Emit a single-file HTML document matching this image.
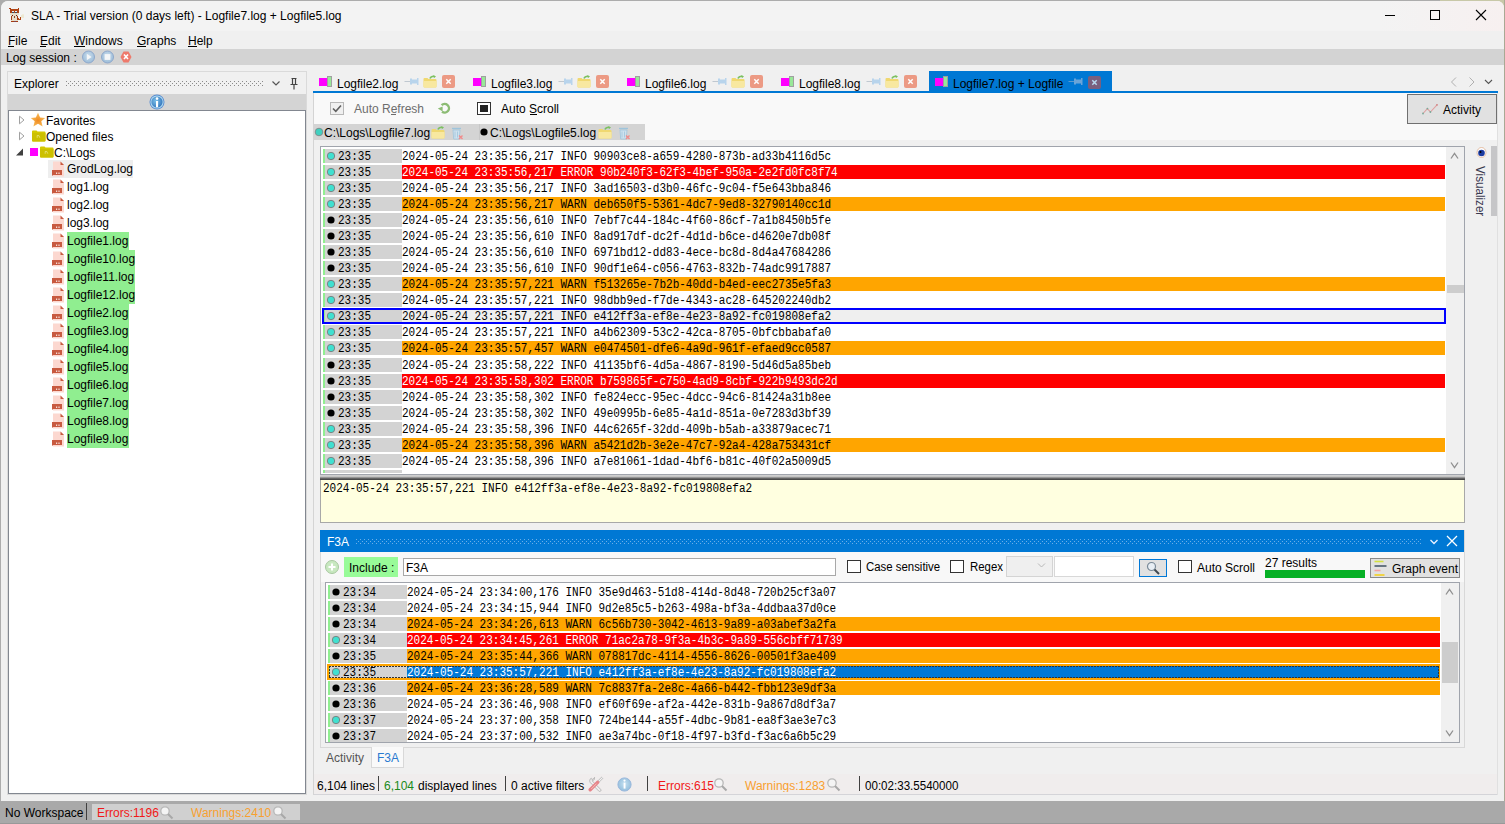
<!DOCTYPE html><html><head><meta charset="utf-8"><style>
html,body{margin:0;padding:0}
body{width:1505px;height:824px;overflow:hidden;position:relative;background:#f0f0f0;font-family:'Liberation Sans',sans-serif;font-size:12px}
div,svg{position:absolute;white-space:nowrap;box-sizing:border-box}
u{text-decoration:none;border-bottom:1px solid currentColor;display:inline-block;line-height:11px}
</style></head><body>
<div style="left:0px;top:0px;width:1505px;height:824px;background:#acacac;"></div>
<div style="left:1440px;top:0px;width:65px;height:30px;background:#c8c8a8;"></div>
<div style="left:1504px;top:0px;width:1px;height:824px;background:#a9a994;"></div>
<div style="left:1px;top:1px;width:1503px;height:822px;background:#f0f0f0;border-radius:7px 7px 0 0;"></div>
<div style="left:1px;top:1px;width:1503px;height:30px;background:#f3f3f3;border-radius:7px 7px 0 0;"></div>
<div style="left:1380px;top:1px;width:124px;height:30px;background:linear-gradient(90deg,#f3f3f3,#f7f0f0);border-radius:0 7px 0 0;"></div>
<div style="left:1px;top:31px;width:1503px;height:18px;background:#f0f0f0;"></div>
<div style="left:1px;top:49px;width:1503px;height:16px;background:#d3d3d3;"></div>
<div style="left:0px;top:801px;width:1505px;height:23px;background:#a9a9a9;"></div>
<div style="left:0px;top:823px;width:1505px;height:1px;background:#999999;"></div>
<svg style="left:6px;top:5px" width="24" height="20" viewBox="0 0 24 20" shape-rendering="crispEdges">
<rect x="3" y="3" width="2" height="1" fill="#a83c10"/><rect x="12" y="3" width="1" height="1" fill="#a83c10"/>
<rect x="4" y="4" width="9" height="5" fill="#b04414"/>
<rect x="4" y="8" width="9" height="2" fill="#e6dcc8"/>
<rect x="6" y="6" width="2" height="1" fill="#e8eef4"/><rect x="9" y="6" width="2" height="1" fill="#e8eef4"/>
<rect x="6" y="7" width="2" height="1" fill="#405060"/><rect x="9" y="7" width="2" height="1" fill="#405060"/>
<rect x="5" y="10" width="7" height="7" fill="#e6dcc8"/>
<rect x="5" y="11" width="1" height="4" fill="#a83c10"/><rect x="11" y="11" width="1" height="4" fill="#a83c10"/>
<rect x="6" y="10" width="1" height="1" fill="#6a1c08"/><rect x="10" y="10" width="1" height="1" fill="#6a1c08"/>
<rect x="8" y="11" width="1" height="2" fill="#8a4a30"/>
<rect x="5" y="16" width="7" height="1" fill="#a83c10"/><rect x="8" y="16" width="2" height="1" fill="#7a4050"/>
<rect x="12" y="13" width="1" height="2" fill="#b04414"/><rect x="13" y="14" width="2" height="1" fill="#b04414"/><rect x="14" y="12" width="1" height="2" fill="#b04414"/>
<rect x="15" y="10" width="3" height="3" fill="#ece8d4"/><rect x="16" y="9" width="2" height="1" fill="#f0ecdc"/>
</svg>
<div style="left:31px;top:10px;font-size:12px;line-height:12px;color:#000;font-family:'Liberation Sans',sans-serif;">SLA - Trial version (0 days left) - Logfile7.log + Logfile5.log</div>
<div style="left:1385px;top:15px;width:10px;height:1px;background:#000;"></div>
<div style="left:1430px;top:10px;width:10px;height:10px;border:1px solid #000;"></div>
<svg style="left:1475px;top:9px" width="12" height="12" viewBox="0 0 12 12"><path d="M1 1L11 11M11 1L1 11" stroke="#000" stroke-width="1.1"/></svg>
<div style="left:8px;top:35px;font-size:12px;line-height:12px;color:#000;font-family:'Liberation Sans',sans-serif;">File</div>
<div style="left:40px;top:35px;font-size:12px;line-height:12px;color:#000;font-family:'Liberation Sans',sans-serif;">Edit</div>
<div style="left:74px;top:35px;font-size:12px;line-height:12px;color:#000;font-family:'Liberation Sans',sans-serif;">Windows</div>
<div style="left:137px;top:35px;font-size:12px;line-height:12px;color:#000;font-family:'Liberation Sans',sans-serif;">Graphs</div>
<div style="left:188px;top:35px;font-size:12px;line-height:12px;color:#000;font-family:'Liberation Sans',sans-serif;">Help</div>
<div style="left:8px;top:46px;width:6px;height:1px;background:#000;"></div>
<div style="left:40px;top:46px;width:6px;height:1px;background:#000;"></div>
<div style="left:74px;top:46px;width:11px;height:1px;background:#000;"></div>
<div style="left:137px;top:46px;width:9px;height:1px;background:#000;"></div>
<div style="left:188px;top:46px;width:9px;height:1px;background:#000;"></div>
<div style="left:6px;top:52px;font-size:12px;line-height:12px;color:#000;font-family:'Liberation Sans',sans-serif;">Log session :</div>
<svg style="left:82px;top:50px" width="52" height="14" viewBox="0 0 52 14">
<defs><radialGradient id="gb" cx="50%" cy="40%" r="60%"><stop offset="0" stop-color="#c8dcec"/><stop offset="1" stop-color="#9cbcd8"/></radialGradient></defs>
<circle cx="6.5" cy="7" r="6" fill="url(#gb)" stroke="#8ea8cc" stroke-width="1"/><path d="M4.8 3.8L9.6 7L4.8 10.2z" fill="#f4f6f8"/>
<circle cx="25.5" cy="7" r="6" fill="url(#gb)" stroke="#8ea8cc" stroke-width="1"/><rect x="22.6" y="4.1" width="5.8" height="5.8" fill="#f4f6f8"/>
<path d="M41.5 1.5h5l3 5.5l-3 5.5h-5l-3-5.5z" fill="#ee7a6c"/><path d="M42 4.5l4 4.5M46 4.5l-4 4.5" stroke="#fff" stroke-width="1.6"/>
</svg>
<div style="left:7px;top:71px;width:300px;height:724px;background:#f0f0f0;border:1px solid #dadada;"></div>
<div style="left:14px;top:78px;font-size:12px;line-height:12px;color:#000;font-family:'Liberation Sans',sans-serif;">Explorer</div>
<div style="left:66px;top:81px;width:198px;height:5px;background:repeating-linear-gradient(90deg,transparent 0 0px,#8a8a8a 0px 1px,transparent 1px 4px) 0 0/100% 1px no-repeat,repeating-linear-gradient(90deg,transparent 0 2px,#8a8a8a 2px 3px,transparent 3px 4px) 0 2px/100% 1px no-repeat,repeating-linear-gradient(90deg,transparent 0 0px,#8a8a8a 0px 1px,transparent 1px 4px) 0 4px/100% 1px no-repeat"></div>
<svg style="left:271px;top:79px" width="10" height="8" viewBox="0 0 10 8"><path d="M1.5 2.5L5 6L8.5 2.5" stroke="#555" stroke-width="1.2" fill="none"/></svg>
<svg style="left:289px;top:77px" width="10" height="13" viewBox="0 0 10 13"><path d="M2.5 1.5h5M3.5 1.5v6M6.5 1.5v6M1.5 7.5h7M5 7.5v5" stroke="#444" stroke-width="1.2" fill="none"/></svg>
<div style="left:8px;top:94px;width:298px;height:16px;background:#d4d4d4;"></div>
<svg style="left:149px;top:94px" width="16" height="16" viewBox="0 0 16 16"><defs><radialGradient id="gi" cx="40%" cy="40%" r="60%"><stop offset="0" stop-color="#7cc0e8"/><stop offset="1" stop-color="#3a7cc0"/></radialGradient></defs>
<circle cx="8" cy="8" r="7.5" fill="#5a8cd0"/><circle cx="8" cy="8" r="6.6" fill="#b0daf0"/><circle cx="8" cy="8" r="5.6" fill="url(#gi)"/><rect x="7" y="7" width="2.1" height="6.2" fill="#fff"/><circle cx="8.05" cy="4.6" r="1.3" fill="#fff"/></svg>
<div style="left:8px;top:110px;width:298px;height:684px;background:#fff;border:1px solid #828790;"></div>
<svg style="left:18px;top:115px" width="8" height="10" viewBox="0 0 8 10"><path d="M1.5 1.2L6 5L1.5 8.8z" fill="none" stroke="#a0a0a0" stroke-width="1"/></svg>
<svg style="left:30px;top:112px" width="16" height="16" viewBox="0 0 16 16"><defs><radialGradient id="gs" cx="50%" cy="55%" r="55%"><stop offset="0" stop-color="#f08a20"/><stop offset="1" stop-color="#f8c060"/></radialGradient></defs>
<path d="M8 0.8L10.1 5.6L15.2 6L11.3 9.3L12.6 14.6L8 11.8L3.4 14.6L4.7 9.3L0.8 6L5.9 5.6z" fill="url(#gs)"/></svg>
<div style="left:46px;top:115px;font-size:12px;line-height:12px;color:#000;font-family:'Liberation Sans',sans-serif;">Favorites</div>
<svg style="left:18px;top:131px" width="8" height="10" viewBox="0 0 8 10"><path d="M1.5 1.2L6 5L1.5 8.8z" fill="none" stroke="#a0a0a0" stroke-width="1"/></svg>
<svg style="left:31px;top:130px" width="15" height="12" viewBox="0 0 15 12"><path d="M1 1.5q0-1 1-1h3.5l1 1H13.5q1 0 1 1V10.5q0 1-1 1H2q-1 0-1-1z" fill="#d4c800"/><path d="M1 3h13.5v7.5q0 1-1 1H2q-1 0-1-1z" fill="#ccc000"/><path d="M6.2 5.5v2.3M6.2 5.5h1.6l1 2.2" stroke="#eee890" stroke-width="0.7" fill="none"/></svg>
<div style="left:46px;top:131px;font-size:12px;line-height:12px;color:#000;font-family:'Liberation Sans',sans-serif;">Opened files</div>
<svg style="left:15px;top:148px" width="9" height="8" viewBox="0 0 9 8"><path d="M1 7.5L8 7.5L8 0.5z" fill="#404040"/></svg>
<div style="left:30px;top:148px;width:8px;height:8px;background:#ff00ff;"></div>
<svg style="left:39px;top:146px" width="15" height="12" viewBox="0 0 15 12"><path d="M1 1.5q0-1 1-1h3.5l1 1H13.5q1 0 1 1V10.5q0 1-1 1H2q-1 0-1-1z" fill="#d4c800"/><path d="M1 3h13.5v7.5q0 1-1 1H2q-1 0-1-1z" fill="#ccc000"/><path d="M6.2 5.5v2.3M6.2 5.5h1.6l1 2.2" stroke="#eee890" stroke-width="0.7" fill="none"/></svg>
<div style="left:54px;top:147px;font-size:12px;line-height:12px;color:#000;font-family:'Liberation Sans',sans-serif;">C:\Logs</div>
<div style="left:48px;top:160px;width:85px;height:18px;background:#eeeeee;"></div>
<svg style="left:52px;top:161px" width="13" height="16" viewBox="0 0 13 16"><path d="M1 0.5H8.5L12 4V15.5H1z" fill="#fcd8d0"/><path d="M8.5 0.5L12 4H8.5z" fill="#c85a40"/><path d="M0 9h10v5H1.2L0 15z" fill="#c85a40"/><rect x="4" y="11.6" width="1.2" height="1.2" fill="#fff"/><rect x="6.4" y="11.6" width="1.2" height="1.2" fill="#fff"/></svg>
<div style="left:67px;top:163px;font-size:12px;line-height:12px;color:#000;font-family:'Liberation Sans',sans-serif;">GrodLog.log</div>
<svg style="left:52px;top:179px" width="13" height="16" viewBox="0 0 13 16"><path d="M1 0.5H8.5L12 4V15.5H1z" fill="#fcd8d0"/><path d="M8.5 0.5L12 4H8.5z" fill="#c85a40"/><path d="M0 9h10v5H1.2L0 15z" fill="#c85a40"/><rect x="4" y="11.6" width="1.2" height="1.2" fill="#fff"/><rect x="6.4" y="11.6" width="1.2" height="1.2" fill="#fff"/></svg>
<div style="left:67px;top:181px;font-size:12px;line-height:12px;color:#000;font-family:'Liberation Sans',sans-serif;">log1.log</div>
<svg style="left:52px;top:197px" width="13" height="16" viewBox="0 0 13 16"><path d="M1 0.5H8.5L12 4V15.5H1z" fill="#fcd8d0"/><path d="M8.5 0.5L12 4H8.5z" fill="#c85a40"/><path d="M0 9h10v5H1.2L0 15z" fill="#c85a40"/><rect x="4" y="11.6" width="1.2" height="1.2" fill="#fff"/><rect x="6.4" y="11.6" width="1.2" height="1.2" fill="#fff"/></svg>
<div style="left:67px;top:199px;font-size:12px;line-height:12px;color:#000;font-family:'Liberation Sans',sans-serif;">log2.log</div>
<svg style="left:52px;top:215px" width="13" height="16" viewBox="0 0 13 16"><path d="M1 0.5H8.5L12 4V15.5H1z" fill="#fcd8d0"/><path d="M8.5 0.5L12 4H8.5z" fill="#c85a40"/><path d="M0 9h10v5H1.2L0 15z" fill="#c85a40"/><rect x="4" y="11.6" width="1.2" height="1.2" fill="#fff"/><rect x="6.4" y="11.6" width="1.2" height="1.2" fill="#fff"/></svg>
<div style="left:67px;top:217px;font-size:12px;line-height:12px;color:#000;font-family:'Liberation Sans',sans-serif;">log3.log</div>
<div style="left:67px;top:232px;width:62px;height:18px;background:#90ee90;"></div>
<svg style="left:52px;top:233px" width="13" height="16" viewBox="0 0 13 16"><path d="M1 0.5H8.5L12 4V15.5H1z" fill="#fcd8d0"/><path d="M8.5 0.5L12 4H8.5z" fill="#c85a40"/><path d="M0 9h10v5H1.2L0 15z" fill="#c85a40"/><rect x="4" y="11.6" width="1.2" height="1.2" fill="#fff"/><rect x="6.4" y="11.6" width="1.2" height="1.2" fill="#fff"/></svg>
<div style="left:67px;top:235px;font-size:12px;line-height:12px;color:#000;font-family:'Liberation Sans',sans-serif;">Logfile1.log</div>
<div style="left:67px;top:250px;width:68px;height:18px;background:#90ee90;"></div>
<svg style="left:52px;top:251px" width="13" height="16" viewBox="0 0 13 16"><path d="M1 0.5H8.5L12 4V15.5H1z" fill="#fcd8d0"/><path d="M8.5 0.5L12 4H8.5z" fill="#c85a40"/><path d="M0 9h10v5H1.2L0 15z" fill="#c85a40"/><rect x="4" y="11.6" width="1.2" height="1.2" fill="#fff"/><rect x="6.4" y="11.6" width="1.2" height="1.2" fill="#fff"/></svg>
<div style="left:67px;top:253px;font-size:12px;line-height:12px;color:#000;font-family:'Liberation Sans',sans-serif;">Logfile10.log</div>
<div style="left:67px;top:268px;width:68px;height:18px;background:#90ee90;"></div>
<svg style="left:52px;top:269px" width="13" height="16" viewBox="0 0 13 16"><path d="M1 0.5H8.5L12 4V15.5H1z" fill="#fcd8d0"/><path d="M8.5 0.5L12 4H8.5z" fill="#c85a40"/><path d="M0 9h10v5H1.2L0 15z" fill="#c85a40"/><rect x="4" y="11.6" width="1.2" height="1.2" fill="#fff"/><rect x="6.4" y="11.6" width="1.2" height="1.2" fill="#fff"/></svg>
<div style="left:67px;top:271px;font-size:12px;line-height:12px;color:#000;font-family:'Liberation Sans',sans-serif;">Logfile11.log</div>
<div style="left:67px;top:286px;width:68px;height:18px;background:#90ee90;"></div>
<svg style="left:52px;top:287px" width="13" height="16" viewBox="0 0 13 16"><path d="M1 0.5H8.5L12 4V15.5H1z" fill="#fcd8d0"/><path d="M8.5 0.5L12 4H8.5z" fill="#c85a40"/><path d="M0 9h10v5H1.2L0 15z" fill="#c85a40"/><rect x="4" y="11.6" width="1.2" height="1.2" fill="#fff"/><rect x="6.4" y="11.6" width="1.2" height="1.2" fill="#fff"/></svg>
<div style="left:67px;top:289px;font-size:12px;line-height:12px;color:#000;font-family:'Liberation Sans',sans-serif;">Logfile12.log</div>
<div style="left:67px;top:304px;width:62px;height:18px;background:#90ee90;"></div>
<svg style="left:52px;top:305px" width="13" height="16" viewBox="0 0 13 16"><path d="M1 0.5H8.5L12 4V15.5H1z" fill="#fcd8d0"/><path d="M8.5 0.5L12 4H8.5z" fill="#c85a40"/><path d="M0 9h10v5H1.2L0 15z" fill="#c85a40"/><rect x="4" y="11.6" width="1.2" height="1.2" fill="#fff"/><rect x="6.4" y="11.6" width="1.2" height="1.2" fill="#fff"/></svg>
<div style="left:67px;top:307px;font-size:12px;line-height:12px;color:#000;font-family:'Liberation Sans',sans-serif;">Logfile2.log</div>
<div style="left:67px;top:322px;width:62px;height:18px;background:#90ee90;"></div>
<svg style="left:52px;top:323px" width="13" height="16" viewBox="0 0 13 16"><path d="M1 0.5H8.5L12 4V15.5H1z" fill="#fcd8d0"/><path d="M8.5 0.5L12 4H8.5z" fill="#c85a40"/><path d="M0 9h10v5H1.2L0 15z" fill="#c85a40"/><rect x="4" y="11.6" width="1.2" height="1.2" fill="#fff"/><rect x="6.4" y="11.6" width="1.2" height="1.2" fill="#fff"/></svg>
<div style="left:67px;top:325px;font-size:12px;line-height:12px;color:#000;font-family:'Liberation Sans',sans-serif;">Logfile3.log</div>
<div style="left:67px;top:340px;width:62px;height:18px;background:#90ee90;"></div>
<svg style="left:52px;top:341px" width="13" height="16" viewBox="0 0 13 16"><path d="M1 0.5H8.5L12 4V15.5H1z" fill="#fcd8d0"/><path d="M8.5 0.5L12 4H8.5z" fill="#c85a40"/><path d="M0 9h10v5H1.2L0 15z" fill="#c85a40"/><rect x="4" y="11.6" width="1.2" height="1.2" fill="#fff"/><rect x="6.4" y="11.6" width="1.2" height="1.2" fill="#fff"/></svg>
<div style="left:67px;top:343px;font-size:12px;line-height:12px;color:#000;font-family:'Liberation Sans',sans-serif;">Logfile4.log</div>
<div style="left:67px;top:358px;width:62px;height:18px;background:#90ee90;"></div>
<svg style="left:52px;top:359px" width="13" height="16" viewBox="0 0 13 16"><path d="M1 0.5H8.5L12 4V15.5H1z" fill="#fcd8d0"/><path d="M8.5 0.5L12 4H8.5z" fill="#c85a40"/><path d="M0 9h10v5H1.2L0 15z" fill="#c85a40"/><rect x="4" y="11.6" width="1.2" height="1.2" fill="#fff"/><rect x="6.4" y="11.6" width="1.2" height="1.2" fill="#fff"/></svg>
<div style="left:67px;top:361px;font-size:12px;line-height:12px;color:#000;font-family:'Liberation Sans',sans-serif;">Logfile5.log</div>
<div style="left:67px;top:376px;width:62px;height:18px;background:#90ee90;"></div>
<svg style="left:52px;top:377px" width="13" height="16" viewBox="0 0 13 16"><path d="M1 0.5H8.5L12 4V15.5H1z" fill="#fcd8d0"/><path d="M8.5 0.5L12 4H8.5z" fill="#c85a40"/><path d="M0 9h10v5H1.2L0 15z" fill="#c85a40"/><rect x="4" y="11.6" width="1.2" height="1.2" fill="#fff"/><rect x="6.4" y="11.6" width="1.2" height="1.2" fill="#fff"/></svg>
<div style="left:67px;top:379px;font-size:12px;line-height:12px;color:#000;font-family:'Liberation Sans',sans-serif;">Logfile6.log</div>
<div style="left:67px;top:394px;width:62px;height:18px;background:#90ee90;"></div>
<svg style="left:52px;top:395px" width="13" height="16" viewBox="0 0 13 16"><path d="M1 0.5H8.5L12 4V15.5H1z" fill="#fcd8d0"/><path d="M8.5 0.5L12 4H8.5z" fill="#c85a40"/><path d="M0 9h10v5H1.2L0 15z" fill="#c85a40"/><rect x="4" y="11.6" width="1.2" height="1.2" fill="#fff"/><rect x="6.4" y="11.6" width="1.2" height="1.2" fill="#fff"/></svg>
<div style="left:67px;top:397px;font-size:12px;line-height:12px;color:#000;font-family:'Liberation Sans',sans-serif;">Logfile7.log</div>
<div style="left:67px;top:412px;width:62px;height:18px;background:#90ee90;"></div>
<svg style="left:52px;top:413px" width="13" height="16" viewBox="0 0 13 16"><path d="M1 0.5H8.5L12 4V15.5H1z" fill="#fcd8d0"/><path d="M8.5 0.5L12 4H8.5z" fill="#c85a40"/><path d="M0 9h10v5H1.2L0 15z" fill="#c85a40"/><rect x="4" y="11.6" width="1.2" height="1.2" fill="#fff"/><rect x="6.4" y="11.6" width="1.2" height="1.2" fill="#fff"/></svg>
<div style="left:67px;top:415px;font-size:12px;line-height:12px;color:#000;font-family:'Liberation Sans',sans-serif;">Logfile8.log</div>
<div style="left:67px;top:430px;width:62px;height:18px;background:#90ee90;"></div>
<svg style="left:52px;top:431px" width="13" height="16" viewBox="0 0 13 16"><path d="M1 0.5H8.5L12 4V15.5H1z" fill="#fcd8d0"/><path d="M8.5 0.5L12 4H8.5z" fill="#c85a40"/><path d="M0 9h10v5H1.2L0 15z" fill="#c85a40"/><rect x="4" y="11.6" width="1.2" height="1.2" fill="#fff"/><rect x="6.4" y="11.6" width="1.2" height="1.2" fill="#fff"/></svg>
<div style="left:67px;top:433px;font-size:12px;line-height:12px;color:#000;font-family:'Liberation Sans',sans-serif;">Logfile9.log</div>
<div style="left:319px;top:78px;width:8px;height:8px;background:#ff00ff;"></div>
<div style="left:327px;top:76px;width:5px;height:11px;background:#98e898;border:1px solid #a0a0a0;"></div>
<div style="left:337px;top:78px;font-size:12px;line-height:12px;color:#000;font-family:'Liberation Sans',sans-serif;">Logfile2.log</div>
<svg style="left:404px;top:77px" width="15" height="9" viewBox="0 0 15 9"><path d="M0.5 4.5H6" stroke="#c0c8d0" stroke-width="1"/><path d="M6 1.5h2v6H6zM8 2.5h5.5v4H8z" fill="#b8d4ec"/><rect x="13" y="1" width="1.5" height="7" fill="#b8d4ec"/></svg>
<svg style="left:423px;top:75px" width="14" height="13" viewBox="0 0 14 13"><path d="M0.5 4q0-1 1-1h3l1 1h7q1 0 1 1v6.5q0 1-1 1h-11q-1 0-1-1z" fill="#f0d870"/><path d="M0.5 6h13v5.5q0 1-1 1h-11q-1 0-1-1z" fill="#f8e8a0"/><path d="M7 3.5q1-2.5 4-2.3" stroke="#7cc060" stroke-width="1.6" fill="none"/><path d="M10.5 0l2.5 1.5l-2.2 1.8z" fill="#7cc060"/></svg>
<svg style="left:442px;top:75px" width="13" height="13" viewBox="0 0 13 13"><rect x="0" y="0" width="13" height="13" rx="2" fill="#ec9a84"/><path d="M4.3 4.3l4.4 4.4M8.7 4.3l-4.4 4.4" stroke="#fff" stroke-width="1.5"/></svg>
<div style="left:473px;top:78px;width:8px;height:8px;background:#ff00ff;"></div>
<div style="left:481px;top:76px;width:5px;height:11px;background:#98e898;border:1px solid #a0a0a0;"></div>
<div style="left:491px;top:78px;font-size:12px;line-height:12px;color:#000;font-family:'Liberation Sans',sans-serif;">Logfile3.log</div>
<svg style="left:558px;top:77px" width="15" height="9" viewBox="0 0 15 9"><path d="M0.5 4.5H6" stroke="#c0c8d0" stroke-width="1"/><path d="M6 1.5h2v6H6zM8 2.5h5.5v4H8z" fill="#b8d4ec"/><rect x="13" y="1" width="1.5" height="7" fill="#b8d4ec"/></svg>
<svg style="left:577px;top:75px" width="14" height="13" viewBox="0 0 14 13"><path d="M0.5 4q0-1 1-1h3l1 1h7q1 0 1 1v6.5q0 1-1 1h-11q-1 0-1-1z" fill="#f0d870"/><path d="M0.5 6h13v5.5q0 1-1 1h-11q-1 0-1-1z" fill="#f8e8a0"/><path d="M7 3.5q1-2.5 4-2.3" stroke="#7cc060" stroke-width="1.6" fill="none"/><path d="M10.5 0l2.5 1.5l-2.2 1.8z" fill="#7cc060"/></svg>
<svg style="left:596px;top:75px" width="13" height="13" viewBox="0 0 13 13"><rect x="0" y="0" width="13" height="13" rx="2" fill="#ec9a84"/><path d="M4.3 4.3l4.4 4.4M8.7 4.3l-4.4 4.4" stroke="#fff" stroke-width="1.5"/></svg>
<div style="left:627px;top:78px;width:8px;height:8px;background:#ff00ff;"></div>
<div style="left:635px;top:76px;width:5px;height:11px;background:#98e898;border:1px solid #a0a0a0;"></div>
<div style="left:645px;top:78px;font-size:12px;line-height:12px;color:#000;font-family:'Liberation Sans',sans-serif;">Logfile6.log</div>
<svg style="left:712px;top:77px" width="15" height="9" viewBox="0 0 15 9"><path d="M0.5 4.5H6" stroke="#c0c8d0" stroke-width="1"/><path d="M6 1.5h2v6H6zM8 2.5h5.5v4H8z" fill="#b8d4ec"/><rect x="13" y="1" width="1.5" height="7" fill="#b8d4ec"/></svg>
<svg style="left:731px;top:75px" width="14" height="13" viewBox="0 0 14 13"><path d="M0.5 4q0-1 1-1h3l1 1h7q1 0 1 1v6.5q0 1-1 1h-11q-1 0-1-1z" fill="#f0d870"/><path d="M0.5 6h13v5.5q0 1-1 1h-11q-1 0-1-1z" fill="#f8e8a0"/><path d="M7 3.5q1-2.5 4-2.3" stroke="#7cc060" stroke-width="1.6" fill="none"/><path d="M10.5 0l2.5 1.5l-2.2 1.8z" fill="#7cc060"/></svg>
<svg style="left:750px;top:75px" width="13" height="13" viewBox="0 0 13 13"><rect x="0" y="0" width="13" height="13" rx="2" fill="#ec9a84"/><path d="M4.3 4.3l4.4 4.4M8.7 4.3l-4.4 4.4" stroke="#fff" stroke-width="1.5"/></svg>
<div style="left:781px;top:78px;width:8px;height:8px;background:#ff00ff;"></div>
<div style="left:789px;top:76px;width:5px;height:11px;background:#98e898;border:1px solid #a0a0a0;"></div>
<div style="left:799px;top:78px;font-size:12px;line-height:12px;color:#000;font-family:'Liberation Sans',sans-serif;">Logfile8.log</div>
<svg style="left:866px;top:77px" width="15" height="9" viewBox="0 0 15 9"><path d="M0.5 4.5H6" stroke="#c0c8d0" stroke-width="1"/><path d="M6 1.5h2v6H6zM8 2.5h5.5v4H8z" fill="#b8d4ec"/><rect x="13" y="1" width="1.5" height="7" fill="#b8d4ec"/></svg>
<svg style="left:885px;top:75px" width="14" height="13" viewBox="0 0 14 13"><path d="M0.5 4q0-1 1-1h3l1 1h7q1 0 1 1v6.5q0 1-1 1h-11q-1 0-1-1z" fill="#f0d870"/><path d="M0.5 6h13v5.5q0 1-1 1h-11q-1 0-1-1z" fill="#f8e8a0"/><path d="M7 3.5q1-2.5 4-2.3" stroke="#7cc060" stroke-width="1.6" fill="none"/><path d="M10.5 0l2.5 1.5l-2.2 1.8z" fill="#7cc060"/></svg>
<svg style="left:904px;top:75px" width="13" height="13" viewBox="0 0 13 13"><rect x="0" y="0" width="13" height="13" rx="2" fill="#ec9a84"/><path d="M4.3 4.3l4.4 4.4M8.7 4.3l-4.4 4.4" stroke="#fff" stroke-width="1.5"/></svg>
<div style="left:929px;top:71px;width:183px;height:21px;background:#0078d4;"></div>
<div style="left:935px;top:78px;width:8px;height:8px;background:#ff00ff;"></div>
<div style="left:943px;top:76px;width:5px;height:11px;background:#98e898;border:1px solid #a0a0a0;"></div>
<div style="left:953px;top:78px;width:110px;height:14px;overflow:hidden;font-size:12px;line-height:12px;color:#000">Logfile7.log + Logfile5.log</div>
<svg style="left:1068px;top:77px" width="15" height="9" viewBox="0 0 15 9"><path d="M0.5 4.5H6" stroke="#5a9ad0" stroke-width="1"/><path d="M6 1.5h2v6H6zM8 2.5h5.5v4H8z" fill="#6aa4d8"/><rect x="13" y="1" width="1.5" height="7" fill="#6aa4d8"/></svg>
<svg style="left:1088px;top:76px" width="13" height="13" viewBox="0 0 13 13"><rect x="0" y="0" width="13" height="13" rx="2" fill="#7a5f7e"/><path d="M4.3 4.3l4.4 4.4M8.7 4.3l-4.4 4.4" stroke="#b8d8f0" stroke-width="1.5"/></svg>
<div style="left:313px;top:91px;width:1185px;height:2px;background:#0078d4;"></div>
<svg style="left:1449px;top:76px" width="48" height="12" viewBox="0 0 48 12"><path d="M7 1.5L2.5 6L7 10.5M20.5 1.5L25 6L20.5 10.5" stroke="#b0b0b0" stroke-width="1" fill="none"/><path d="M36 4L39.5 7.5L43 4" stroke="#555" stroke-width="1.1" fill="none"/></svg>
<div style="left:313px;top:93px;width:1185px;height:702px;background:#f0f0f0;border-left:1px solid #d4d4d4;border-right:1px solid #e0e0e0;"></div>
<div style="left:314px;top:93px;width:1183px;height:47px;background:#f9f9f9;"></div>
<div style="left:330px;top:102px;width:14px;height:13px;background:#f0f0f0;border:1px solid #b8b8b8;"></div>
<svg style="left:330px;top:102px" width="14" height="13" viewBox="0 0 14 13"><path d="M3 6.5L5.8 9.3L11 3.5" stroke="#606060" stroke-width="1.6" fill="none"/></svg>
<div style="left:354px;top:103px;font-size:12px;line-height:12px;color:#6d6d6d;font-family:'Liberation Sans',sans-serif;">Auto Refresh</div>
<div style="left:391px;top:114px;width:5px;height:1px;background:#6d6d6d;"></div>
<svg style="left:437px;top:101px" width="15" height="14" viewBox="0 0 15 14"><path d="M4.6 4.2A4.3 4.3 0 1 1 5 10.6" stroke="#8cbc74" stroke-width="2.4" fill="none"/><path d="M0.8 7.6L5.6 5.4L5.6 10.4z" fill="#8cbc74"/></svg>
<div style="left:477px;top:102px;width:14px;height:13px;background:#fff;border:1px solid #333;"></div>
<div style="left:480px;top:105px;width:8px;height:7px;background:#222;"></div>
<div style="left:501px;top:103px;font-size:12px;line-height:12px;color:#000;font-family:'Liberation Sans',sans-serif;">Auto Scroll</div>
<div style="left:530px;top:114px;width:7px;height:1px;background:#000;"></div>
<div style="left:1407px;top:94px;width:90px;height:30px;background:#e1e1e1;border:1px solid #707070;"></div>
<svg style="left:1420px;top:101px" width="18" height="16" viewBox="0 0 18 16"><path d="M3 12.5L7.4 7.6L10.4 11L17 3.8" stroke="#e0a0a0" stroke-width="1.1" fill="none"/><circle cx="3" cy="12.5" r="0.9" fill="#7aaa9a"/><circle cx="7.4" cy="7.6" r="0.9" fill="#7aaa9a"/><circle cx="10.4" cy="11" r="0.9" fill="#7aaa9a"/><circle cx="17" cy="3.8" r="0.9" fill="#d08080"/></svg>
<div style="left:1443px;top:104px;font-size:12px;line-height:12px;color:#000;font-family:'Liberation Sans',sans-serif;">Activity</div>
<div style="left:314px;top:124px;width:331px;height:16px;background:#d4d4d4;"></div>
<div style="left:479px;top:124px;width:1px;height:16px;background:#c8c8c8;"></div>
<svg style="left:314px;top:127px" width="10" height="10"><circle cx="5" cy="5" r="3.8" fill="#40d0c0" stroke="#808080" stroke-width="0.8"/></svg>
<div style="left:324px;top:127px;font-size:12px;line-height:12px;color:#000;font-family:'Liberation Sans',sans-serif;">C:\Logs\Logfile7.log</div>
<svg style="left:479px;top:127px" width="10" height="10"><circle cx="5" cy="5" r="3.6" fill="#000"/></svg>
<div style="left:490px;top:127px;font-size:12px;line-height:12px;color:#000;font-family:'Liberation Sans',sans-serif;">C:\Logs\Logfile5.log</div>
<svg style="left:431px;top:126px" width="14" height="13" viewBox="0 0 14 13"><path d="M0.5 4q0-1 1-1h3l1 1h7q1 0 1 1v6.5q0 1-1 1h-11q-1 0-1-1z" fill="#f0d870"/><path d="M0.5 6h13v5.5q0 1-1 1h-11q-1 0-1-1z" fill="#f8e8a0"/><path d="M7 3.5q1-2.5 4-2.3" stroke="#7cc060" stroke-width="1.6" fill="none"/><path d="M10.5 0l2.5 1.5l-2.2 1.8z" fill="#7cc060"/></svg>
<svg style="left:450px;top:126px" width="14" height="14" viewBox="0 0 14 14"><path d="M2 2.5h9" stroke="#9ec4dc" stroke-width="1.4"/><path d="M3 4h7l-0.7 9H3.7z" fill="#cfe2ee" stroke="#9ec4dc" stroke-width="0.8"/><path d="M5 5.5v6M7.5 5.5v6" stroke="#9ec4dc" stroke-width="0.8"/><path d="M9 9.5l3.5 3.5M12.5 9.5L9 13" stroke="#f08c8c" stroke-width="1.4"/></svg>
<svg style="left:598px;top:126px" width="14" height="13" viewBox="0 0 14 13"><path d="M0.5 4q0-1 1-1h3l1 1h7q1 0 1 1v6.5q0 1-1 1h-11q-1 0-1-1z" fill="#f0d870"/><path d="M0.5 6h13v5.5q0 1-1 1h-11q-1 0-1-1z" fill="#f8e8a0"/><path d="M7 3.5q1-2.5 4-2.3" stroke="#7cc060" stroke-width="1.6" fill="none"/><path d="M10.5 0l2.5 1.5l-2.2 1.8z" fill="#7cc060"/></svg>
<svg style="left:617px;top:126px" width="14" height="14" viewBox="0 0 14 14"><path d="M2 2.5h9" stroke="#9ec4dc" stroke-width="1.4"/><path d="M3 4h7l-0.7 9H3.7z" fill="#cfe2ee" stroke="#9ec4dc" stroke-width="0.8"/><path d="M5 5.5v6M7.5 5.5v6" stroke="#9ec4dc" stroke-width="0.8"/><path d="M9 9.5l3.5 3.5M12.5 9.5L9 13" stroke="#f08c8c" stroke-width="1.4"/></svg>
<div style="left:320px;top:146px;width:1145px;height:329px;background:#fff;border:1px solid #a0a4ac;"></div>
<div style="left:323px;top:149px;width:2px;height:14px;background:#90ee90;"></div>
<div style="left:325px;top:149px;width:77px;height:14px;background:#d3d3d3;"></div>
<svg style="left:326px;top:151px" width="10" height="10"><circle cx="5" cy="5" r="3.7" fill="#40e0d0" stroke="#7a7a7a" stroke-width="0.9"/></svg>
<div style="left:338px;top:151px;font-size:12px;line-height:12px;color:#000;font-family:'Liberation Mono',monospace;transform:scaleX(0.9167);transform-origin:0 0;">23:35</div>
<div style="left:402px;top:151px;font-size:12px;line-height:12px;color:#000;font-family:'Liberation Mono',monospace;transform:scaleX(0.9167);transform-origin:0 0;">2024-05-24 23:35:56,217 INFO 90903ce8-a659-4280-873b-ad33b4116d5c</div>
<div style="left:323px;top:165px;width:2px;height:14px;background:#90ee90;"></div>
<div style="left:325px;top:165px;width:77px;height:14px;background:#d3d3d3;"></div>
<div style="left:402px;top:165px;width:1043px;height:14px;background:#ff0000;"></div>
<svg style="left:326px;top:167px" width="10" height="10"><circle cx="5" cy="5" r="3.7" fill="#40e0d0" stroke="#7a7a7a" stroke-width="0.9"/></svg>
<div style="left:338px;top:167px;font-size:12px;line-height:12px;color:#000;font-family:'Liberation Mono',monospace;transform:scaleX(0.9167);transform-origin:0 0;">23:35</div>
<div style="left:402px;top:167px;font-size:12px;line-height:12px;color:#fff;font-family:'Liberation Mono',monospace;transform:scaleX(0.9167);transform-origin:0 0;">2024-05-24 23:35:56,217 ERROR 90b240f3-62f3-4bef-950a-2e2fd0fc8f74</div>
<div style="left:323px;top:181px;width:2px;height:14px;background:#90ee90;"></div>
<div style="left:325px;top:181px;width:77px;height:14px;background:#d3d3d3;"></div>
<svg style="left:326px;top:183px" width="10" height="10"><circle cx="5" cy="5" r="3.7" fill="#40e0d0" stroke="#7a7a7a" stroke-width="0.9"/></svg>
<div style="left:338px;top:183px;font-size:12px;line-height:12px;color:#000;font-family:'Liberation Mono',monospace;transform:scaleX(0.9167);transform-origin:0 0;">23:35</div>
<div style="left:402px;top:183px;font-size:12px;line-height:12px;color:#000;font-family:'Liberation Mono',monospace;transform:scaleX(0.9167);transform-origin:0 0;">2024-05-24 23:35:56,217 INFO 3ad16503-d3b0-46fc-9c04-f5e643bba846</div>
<div style="left:323px;top:197px;width:2px;height:14px;background:#90ee90;"></div>
<div style="left:325px;top:197px;width:77px;height:14px;background:#d3d3d3;"></div>
<div style="left:402px;top:197px;width:1043px;height:14px;background:#ffa500;"></div>
<svg style="left:326px;top:199px" width="10" height="10"><circle cx="5" cy="5" r="3.7" fill="#40e0d0" stroke="#7a7a7a" stroke-width="0.9"/></svg>
<div style="left:338px;top:199px;font-size:12px;line-height:12px;color:#000;font-family:'Liberation Mono',monospace;transform:scaleX(0.9167);transform-origin:0 0;">23:35</div>
<div style="left:402px;top:199px;font-size:12px;line-height:12px;color:#000;font-family:'Liberation Mono',monospace;transform:scaleX(0.9167);transform-origin:0 0;">2024-05-24 23:35:56,217 WARN deb650f5-5361-4dc7-9ed8-32790140cc1d</div>
<div style="left:323px;top:213px;width:2px;height:14px;background:#90ee90;"></div>
<div style="left:325px;top:213px;width:77px;height:14px;background:#d3d3d3;"></div>
<svg style="left:326px;top:215px" width="10" height="10"><circle cx="5" cy="5" r="3.6" fill="#000"/></svg>
<div style="left:338px;top:215px;font-size:12px;line-height:12px;color:#000;font-family:'Liberation Mono',monospace;transform:scaleX(0.9167);transform-origin:0 0;">23:35</div>
<div style="left:402px;top:215px;font-size:12px;line-height:12px;color:#000;font-family:'Liberation Mono',monospace;transform:scaleX(0.9167);transform-origin:0 0;">2024-05-24 23:35:56,610 INFO 7ebf7c44-184c-4f60-86cf-7a1b8450b5fe</div>
<div style="left:323px;top:229px;width:2px;height:14px;background:#90ee90;"></div>
<div style="left:325px;top:229px;width:77px;height:14px;background:#d3d3d3;"></div>
<svg style="left:326px;top:231px" width="10" height="10"><circle cx="5" cy="5" r="3.6" fill="#000"/></svg>
<div style="left:338px;top:231px;font-size:12px;line-height:12px;color:#000;font-family:'Liberation Mono',monospace;transform:scaleX(0.9167);transform-origin:0 0;">23:35</div>
<div style="left:402px;top:231px;font-size:12px;line-height:12px;color:#000;font-family:'Liberation Mono',monospace;transform:scaleX(0.9167);transform-origin:0 0;">2024-05-24 23:35:56,610 INFO 8ad917df-dc2f-4d1d-b6ce-d4620e7db08f</div>
<div style="left:323px;top:245px;width:2px;height:14px;background:#90ee90;"></div>
<div style="left:325px;top:245px;width:77px;height:14px;background:#d3d3d3;"></div>
<svg style="left:326px;top:247px" width="10" height="10"><circle cx="5" cy="5" r="3.6" fill="#000"/></svg>
<div style="left:338px;top:247px;font-size:12px;line-height:12px;color:#000;font-family:'Liberation Mono',monospace;transform:scaleX(0.9167);transform-origin:0 0;">23:35</div>
<div style="left:402px;top:247px;font-size:12px;line-height:12px;color:#000;font-family:'Liberation Mono',monospace;transform:scaleX(0.9167);transform-origin:0 0;">2024-05-24 23:35:56,610 INFO 6971bd12-dd83-4ece-bc8d-8d4a47684286</div>
<div style="left:323px;top:261px;width:2px;height:14px;background:#90ee90;"></div>
<div style="left:325px;top:261px;width:77px;height:14px;background:#d3d3d3;"></div>
<svg style="left:326px;top:263px" width="10" height="10"><circle cx="5" cy="5" r="3.6" fill="#000"/></svg>
<div style="left:338px;top:263px;font-size:12px;line-height:12px;color:#000;font-family:'Liberation Mono',monospace;transform:scaleX(0.9167);transform-origin:0 0;">23:35</div>
<div style="left:402px;top:263px;font-size:12px;line-height:12px;color:#000;font-family:'Liberation Mono',monospace;transform:scaleX(0.9167);transform-origin:0 0;">2024-05-24 23:35:56,610 INFO 90df1e64-c056-4763-832b-74adc9917887</div>
<div style="left:323px;top:277px;width:2px;height:14px;background:#90ee90;"></div>
<div style="left:325px;top:277px;width:77px;height:14px;background:#d3d3d3;"></div>
<div style="left:402px;top:277px;width:1043px;height:14px;background:#ffa500;"></div>
<svg style="left:326px;top:279px" width="10" height="10"><circle cx="5" cy="5" r="3.7" fill="#40e0d0" stroke="#7a7a7a" stroke-width="0.9"/></svg>
<div style="left:338px;top:279px;font-size:12px;line-height:12px;color:#000;font-family:'Liberation Mono',monospace;transform:scaleX(0.9167);transform-origin:0 0;">23:35</div>
<div style="left:402px;top:279px;font-size:12px;line-height:12px;color:#000;font-family:'Liberation Mono',monospace;transform:scaleX(0.9167);transform-origin:0 0;">2024-05-24 23:35:57,221 WARN f513265e-7b2b-40dd-b4ed-eec2735e5fa3</div>
<div style="left:323px;top:293px;width:2px;height:14px;background:#90ee90;"></div>
<div style="left:325px;top:293px;width:77px;height:14px;background:#d3d3d3;"></div>
<svg style="left:326px;top:295px" width="10" height="10"><circle cx="5" cy="5" r="3.7" fill="#40e0d0" stroke="#7a7a7a" stroke-width="0.9"/></svg>
<div style="left:338px;top:295px;font-size:12px;line-height:12px;color:#000;font-family:'Liberation Mono',monospace;transform:scaleX(0.9167);transform-origin:0 0;">23:35</div>
<div style="left:402px;top:295px;font-size:12px;line-height:12px;color:#000;font-family:'Liberation Mono',monospace;transform:scaleX(0.9167);transform-origin:0 0;">2024-05-24 23:35:57,221 INFO 98dbb9ed-f7de-4343-ac28-645202240db2</div>
<div style="left:322px;top:308px;width:1124px;height:16px;border:2px solid #0000ff;"></div>
<div style="left:324px;top:310px;width:1120px;height:12px;background:#fffff2;"></div>
<div style="left:323px;top:309px;width:2px;height:14px;background:#90ee90;"></div>
<div style="left:325px;top:309px;width:77px;height:14px;background:#d3d3d3;"></div>
<div style="left:402px;top:309px;width:1042px;height:14px;background:#efefef;"></div>
<svg style="left:326px;top:311px" width="10" height="10"><circle cx="5" cy="5" r="3.7" fill="#40e0d0" stroke="#7a7a7a" stroke-width="0.9"/></svg>
<div style="left:338px;top:311px;font-size:12px;line-height:12px;color:#000;font-family:'Liberation Mono',monospace;transform:scaleX(0.9167);transform-origin:0 0;">23:35</div>
<div style="left:402px;top:311px;font-size:12px;line-height:12px;color:#000;font-family:'Liberation Mono',monospace;transform:scaleX(0.9167);transform-origin:0 0;">2024-05-24 23:35:57,221 INFO e412ff3a-ef8e-4e23-8a92-fc019808efa2</div>
<div style="left:322px;top:308px;width:1124px;height:16px;border:2px solid #0000ff;"></div>
<div style="left:323px;top:325px;width:2px;height:14px;background:#90ee90;"></div>
<div style="left:325px;top:325px;width:77px;height:14px;background:#d3d3d3;"></div>
<svg style="left:326px;top:327px" width="10" height="10"><circle cx="5" cy="5" r="3.7" fill="#40e0d0" stroke="#7a7a7a" stroke-width="0.9"/></svg>
<div style="left:338px;top:327px;font-size:12px;line-height:12px;color:#000;font-family:'Liberation Mono',monospace;transform:scaleX(0.9167);transform-origin:0 0;">23:35</div>
<div style="left:402px;top:327px;font-size:12px;line-height:12px;color:#000;font-family:'Liberation Mono',monospace;transform:scaleX(0.9167);transform-origin:0 0;">2024-05-24 23:35:57,221 INFO a4b62309-53c2-42ca-8705-0bfcbbabafa0</div>
<div style="left:323px;top:341px;width:2px;height:14px;background:#90ee90;"></div>
<div style="left:325px;top:341px;width:77px;height:14px;background:#d3d3d3;"></div>
<div style="left:402px;top:341px;width:1043px;height:14px;background:#ffa500;"></div>
<svg style="left:326px;top:343px" width="10" height="10"><circle cx="5" cy="5" r="3.7" fill="#40e0d0" stroke="#7a7a7a" stroke-width="0.9"/></svg>
<div style="left:338px;top:343px;font-size:12px;line-height:12px;color:#000;font-family:'Liberation Mono',monospace;transform:scaleX(0.9167);transform-origin:0 0;">23:35</div>
<div style="left:402px;top:343px;font-size:12px;line-height:12px;color:#000;font-family:'Liberation Mono',monospace;transform:scaleX(0.9167);transform-origin:0 0;">2024-05-24 23:35:57,457 WARN e0474501-dfe6-4a9d-961f-efaed9cc0587</div>
<div style="left:323px;top:358px;width:2px;height:14px;background:#90ee90;"></div>
<div style="left:325px;top:358px;width:77px;height:14px;background:#d3d3d3;"></div>
<svg style="left:326px;top:360px" width="10" height="10"><circle cx="5" cy="5" r="3.6" fill="#000"/></svg>
<div style="left:338px;top:360px;font-size:12px;line-height:12px;color:#000;font-family:'Liberation Mono',monospace;transform:scaleX(0.9167);transform-origin:0 0;">23:35</div>
<div style="left:402px;top:360px;font-size:12px;line-height:12px;color:#000;font-family:'Liberation Mono',monospace;transform:scaleX(0.9167);transform-origin:0 0;">2024-05-24 23:35:58,222 INFO 41135bf6-4d5a-4867-8190-5d46d5a85beb</div>
<div style="left:323px;top:374px;width:2px;height:14px;background:#90ee90;"></div>
<div style="left:325px;top:374px;width:77px;height:14px;background:#d3d3d3;"></div>
<div style="left:402px;top:374px;width:1043px;height:14px;background:#ff0000;"></div>
<svg style="left:326px;top:376px" width="10" height="10"><circle cx="5" cy="5" r="3.6" fill="#000"/></svg>
<div style="left:338px;top:376px;font-size:12px;line-height:12px;color:#000;font-family:'Liberation Mono',monospace;transform:scaleX(0.9167);transform-origin:0 0;">23:35</div>
<div style="left:402px;top:376px;font-size:12px;line-height:12px;color:#fff;font-family:'Liberation Mono',monospace;transform:scaleX(0.9167);transform-origin:0 0;">2024-05-24 23:35:58,302 ERROR b759865f-c750-4ad9-8cbf-922b9493dc2d</div>
<div style="left:323px;top:390px;width:2px;height:14px;background:#90ee90;"></div>
<div style="left:325px;top:390px;width:77px;height:14px;background:#d3d3d3;"></div>
<svg style="left:326px;top:392px" width="10" height="10"><circle cx="5" cy="5" r="3.6" fill="#000"/></svg>
<div style="left:338px;top:392px;font-size:12px;line-height:12px;color:#000;font-family:'Liberation Mono',monospace;transform:scaleX(0.9167);transform-origin:0 0;">23:35</div>
<div style="left:402px;top:392px;font-size:12px;line-height:12px;color:#000;font-family:'Liberation Mono',monospace;transform:scaleX(0.9167);transform-origin:0 0;">2024-05-24 23:35:58,302 INFO fe824ecc-95ec-4dcc-94c6-81424a31b8ee</div>
<div style="left:323px;top:406px;width:2px;height:14px;background:#90ee90;"></div>
<div style="left:325px;top:406px;width:77px;height:14px;background:#d3d3d3;"></div>
<svg style="left:326px;top:408px" width="10" height="10"><circle cx="5" cy="5" r="3.6" fill="#000"/></svg>
<div style="left:338px;top:408px;font-size:12px;line-height:12px;color:#000;font-family:'Liberation Mono',monospace;transform:scaleX(0.9167);transform-origin:0 0;">23:35</div>
<div style="left:402px;top:408px;font-size:12px;line-height:12px;color:#000;font-family:'Liberation Mono',monospace;transform:scaleX(0.9167);transform-origin:0 0;">2024-05-24 23:35:58,302 INFO 49e0995b-6e85-4a1d-851a-0e7283d3bf39</div>
<div style="left:323px;top:422px;width:2px;height:14px;background:#90ee90;"></div>
<div style="left:325px;top:422px;width:77px;height:14px;background:#d3d3d3;"></div>
<svg style="left:326px;top:424px" width="10" height="10"><circle cx="5" cy="5" r="3.7" fill="#40e0d0" stroke="#7a7a7a" stroke-width="0.9"/></svg>
<div style="left:338px;top:424px;font-size:12px;line-height:12px;color:#000;font-family:'Liberation Mono',monospace;transform:scaleX(0.9167);transform-origin:0 0;">23:35</div>
<div style="left:402px;top:424px;font-size:12px;line-height:12px;color:#000;font-family:'Liberation Mono',monospace;transform:scaleX(0.9167);transform-origin:0 0;">2024-05-24 23:35:58,396 INFO 44c6265f-32dd-409b-b5ab-a33879acec71</div>
<div style="left:323px;top:438px;width:2px;height:14px;background:#90ee90;"></div>
<div style="left:325px;top:438px;width:77px;height:14px;background:#d3d3d3;"></div>
<div style="left:402px;top:438px;width:1043px;height:14px;background:#ffa500;"></div>
<svg style="left:326px;top:440px" width="10" height="10"><circle cx="5" cy="5" r="3.7" fill="#40e0d0" stroke="#7a7a7a" stroke-width="0.9"/></svg>
<div style="left:338px;top:440px;font-size:12px;line-height:12px;color:#000;font-family:'Liberation Mono',monospace;transform:scaleX(0.9167);transform-origin:0 0;">23:35</div>
<div style="left:402px;top:440px;font-size:12px;line-height:12px;color:#000;font-family:'Liberation Mono',monospace;transform:scaleX(0.9167);transform-origin:0 0;">2024-05-24 23:35:58,396 WARN a5421d2b-3e2e-47c7-92a4-428a753431cf</div>
<div style="left:323px;top:454px;width:2px;height:14px;background:#90ee90;"></div>
<div style="left:325px;top:454px;width:77px;height:14px;background:#d3d3d3;"></div>
<svg style="left:326px;top:456px" width="10" height="10"><circle cx="5" cy="5" r="3.7" fill="#40e0d0" stroke="#7a7a7a" stroke-width="0.9"/></svg>
<div style="left:338px;top:456px;font-size:12px;line-height:12px;color:#000;font-family:'Liberation Mono',monospace;transform:scaleX(0.9167);transform-origin:0 0;">23:35</div>
<div style="left:402px;top:456px;font-size:12px;line-height:12px;color:#000;font-family:'Liberation Mono',monospace;transform:scaleX(0.9167);transform-origin:0 0;">2024-05-24 23:35:58,396 INFO a7e81061-1dad-4bf6-b81c-40f02a5009d5</div>
<div style="left:323px;top:470px;width:2px;height:3px;background:#90ee90;"></div>
<div style="left:325px;top:470px;width:77px;height:3px;background:#d3d3d3;"></div>
<div style="left:1446px;top:147px;width:18px;height:327px;background:#f0f0f0;"></div>
<svg style="left:1450px;top:152px" width="10" height="8"><path d="M1 6.5L4.5 1.5L8 6.5" stroke="#909090" stroke-width="1.3" fill="none"/></svg>
<svg style="left:1450px;top:461px" width="10" height="8"><path d="M1 1.5L4.5 6.5L8 1.5" stroke="#909090" stroke-width="1.3" fill="none"/></svg>
<div style="left:1447px;top:285px;width:17px;height:8px;background:#cdcdcd;"></div>
<div style="left:320px;top:474px;width:1145px;height:1px;background:#a0a4ac;"></div>
<div style="left:320px;top:475px;width:1145px;height:5px;background:linear-gradient(#d4d4d4,#c4c4c4 30%,#5a5a5a 75%,#404040);"></div>
<div style="left:320px;top:480px;width:1145px;height:43px;background:#ffffe0;border:1px solid #a8a8a8;border-top:none;"></div>
<div style="left:323px;top:483px;font-size:12px;line-height:12px;color:#000;font-family:'Liberation Mono',monospace;transform:scaleX(0.9167);transform-origin:0 0;">2024-05-24 23:35:57,221 INFO e412ff3a-ef8e-4e23-8a92-fc019808efa2</div>
<svg style="left:1476px;top:147px" width="11" height="11" viewBox="0 0 11 11"><ellipse cx="5.5" cy="5.5" rx="4.5" ry="5" fill="#fff" stroke="#e0b090" stroke-width="0.8"/><circle cx="5.5" cy="6" r="3.3" fill="#1a3aa0"/><circle cx="4.5" cy="5" r="1" fill="#000"/></svg>
<div style="left:1474px;top:166px;font-size:12px;line-height:12px;color:#3a3a50;transform:rotate(90deg) scaleX(0.97);transform-origin:0 0;left:1486px">Visualizer</div>
<div style="left:1491px;top:146px;width:6px;height:70px;background:#c6c6c8;"></div>
<div style="left:320px;top:530px;width:1145px;height:218px;background:#f0f0f0;border:1px solid #d8d8d8;border-top:none;"></div>
<div style="left:320px;top:530px;width:1144px;height:22px;background:#0078d4;"></div>
<div style="left:327px;top:536px;font-size:12px;line-height:12px;color:#fff;font-family:'Liberation Sans',sans-serif;">F3A</div>
<div style="left:356px;top:539px;width:1066px;height:5px;background:repeating-linear-gradient(90deg,transparent 0 0px,#6aaee8 0px 1px,transparent 1px 4px) 0 0/100% 1px no-repeat,repeating-linear-gradient(90deg,transparent 0 2px,#6aaee8 2px 3px,transparent 3px 4px) 0 2px/100% 1px no-repeat,repeating-linear-gradient(90deg,transparent 0 0px,#6aaee8 0px 1px,transparent 1px 4px) 0 4px/100% 1px no-repeat"></div>
<svg style="left:1429px;top:538px" width="10" height="8"><path d="M1.5 2L5 5.5L8.5 2" stroke="#e8f0ff" stroke-width="1.4" fill="none"/></svg>
<svg style="left:1446px;top:535px" width="12" height="12"><path d="M1 1L11 11M11 1L1 11" stroke="#fff" stroke-width="1.3"/></svg>
<div style="left:321px;top:552px;width:1143px;height:30px;background:#f8f8f8;"></div>
<svg style="left:324px;top:559px" width="16" height="16"><circle cx="8" cy="8" r="6.5" fill="#c8e8c0" stroke="#a8c8a0" stroke-width="1"/><path d="M8 4.5v7M4.5 8h7" stroke="#fff" stroke-width="2"/></svg>
<div style="left:344px;top:557px;width:54px;height:20px;background:#98fb98;"></div>
<div style="left:349px;top:562px;font-size:12px;line-height:12px;color:#000;font-family:'Liberation Sans',sans-serif;">Include :</div>
<div style="left:403px;top:558px;width:433px;height:18px;background:#fff;border:1px solid #a8a8a8;"></div>
<div style="left:406px;top:562px;font-size:12px;line-height:12px;color:#000;font-family:'Liberation Sans',sans-serif;">F3A</div>
<div style="left:847px;top:560px;width:14px;height:13px;background:#fff;border:1px solid #333;"></div>
<div style="left:866px;top:561px;font-size:12px;line-height:12px;color:#000;font-family:'Liberation Sans',sans-serif;transform:scaleX(0.95);transform-origin:0 0;">Case sensitive</div>
<div style="left:950px;top:560px;width:14px;height:13px;background:#fff;border:1px solid #333;"></div>
<div style="left:970px;top:561px;font-size:12px;line-height:12px;color:#000;font-family:'Liberation Sans',sans-serif;transform:scaleX(0.95);transform-origin:0 0;">Regex</div>
<div style="left:1006px;top:556px;width:47px;height:21px;background:#efefef;border:1px solid #d4d4d4;"></div>
<svg style="left:1037px;top:562px" width="9" height="7"><path d="M1 1.5L4.5 5L8 1.5" stroke="#b8b8b8" stroke-width="1" fill="none"/></svg>
<div style="left:1054px;top:556px;width:80px;height:21px;background:#fff;border:1px solid #d8d8d8;"></div>
<div style="left:1139px;top:559px;width:28px;height:18px;background:#e1e1e1;border:1px solid #0078d7;"></div>
<svg style="left:1145px;top:560px" width="16" height="16" viewBox="0 0 16 16"><circle cx="6.5" cy="6.5" r="4" fill="#e8eef4" stroke="#7a8a98" stroke-width="1.2"/><path d="M9.5 9.5L14 14" stroke="#404850" stroke-width="2"/></svg>
<div style="left:1178px;top:560px;width:14px;height:13px;background:#fff;border:1px solid #333;"></div>
<div style="left:1197px;top:562px;font-size:12px;line-height:12px;color:#000;font-family:'Liberation Sans',sans-serif;">Auto Scroll</div>
<div style="left:1265px;top:557px;font-size:12px;line-height:12px;color:#000;font-family:'Liberation Sans',sans-serif;">27 results</div>
<div style="left:1265px;top:570px;width:100px;height:8px;background:#06b025;"></div>
<div style="left:1370px;top:558px;width:90px;height:20px;background:#e1e1e1;border:1px solid #8a8a8a;"></div>
<svg style="left:1373px;top:560px" width="16" height="17" viewBox="0 0 16 17"><path d="M1.5 1.5h9" stroke="#d4e040" stroke-width="1.6"/><path d="M1.5 6h12" stroke="#4a5a6a" stroke-width="1.6"/><path d="M1.5 10.5h6" stroke="#f4a0a0" stroke-width="1.6"/><path d="M1.5 15h10" stroke="#f4d020" stroke-width="1.6"/></svg>
<div style="left:1392px;top:563px;font-size:12px;line-height:12px;color:#000;font-family:'Liberation Sans',sans-serif;">Graph event</div>
<div style="left:325px;top:582px;width:1135px;height:161px;background:#fff;border:1px solid #a0a4ac;"></div>
<div style="left:326px;top:583px;width:1114px;height:159px;overflow:hidden">
<div style="left:2px;top:2px;width:2px;height:14px;background:#90ee90;"></div>
<div style="left:4px;top:2px;width:77px;height:14px;background:#d3d3d3;"></div>
<svg style="left:5px;top:4px" width="10" height="10"><circle cx="5" cy="5" r="3.6" fill="#000"/></svg>
<div style="left:17px;top:4px;font-size:12px;line-height:12px;color:#000;font-family:'Liberation Mono',monospace;transform:scaleX(0.9167);transform-origin:0 0;">23:34</div>
<div style="left:81px;top:4px;font-size:12px;line-height:12px;color:#000;font-family:'Liberation Mono',monospace;transform:scaleX(0.9167);transform-origin:0 0;">2024-05-24 23:34:00,176 INFO 35e9d463-51d8-414d-8d48-720b25cf3a07</div>
<div style="left:2px;top:18px;width:2px;height:14px;background:#90ee90;"></div>
<div style="left:4px;top:18px;width:77px;height:14px;background:#d3d3d3;"></div>
<svg style="left:5px;top:20px" width="10" height="10"><circle cx="5" cy="5" r="3.6" fill="#000"/></svg>
<div style="left:17px;top:20px;font-size:12px;line-height:12px;color:#000;font-family:'Liberation Mono',monospace;transform:scaleX(0.9167);transform-origin:0 0;">23:34</div>
<div style="left:81px;top:20px;font-size:12px;line-height:12px;color:#000;font-family:'Liberation Mono',monospace;transform:scaleX(0.9167);transform-origin:0 0;">2024-05-24 23:34:15,944 INFO 9d2e85c5-b263-498a-bf3a-4ddbaa37d0ce</div>
<div style="left:2px;top:34px;width:2px;height:14px;background:#90ee90;"></div>
<div style="left:4px;top:34px;width:77px;height:14px;background:#d3d3d3;"></div>
<div style="left:81px;top:34px;width:1033px;height:14px;background:#ffa500;"></div>
<svg style="left:5px;top:36px" width="10" height="10"><circle cx="5" cy="5" r="3.6" fill="#000"/></svg>
<div style="left:17px;top:36px;font-size:12px;line-height:12px;color:#000;font-family:'Liberation Mono',monospace;transform:scaleX(0.9167);transform-origin:0 0;">23:34</div>
<div style="left:81px;top:36px;font-size:12px;line-height:12px;color:#000;font-family:'Liberation Mono',monospace;transform:scaleX(0.9167);transform-origin:0 0;">2024-05-24 23:34:26,613 WARN 6c56b730-3042-4613-9a89-a03abef3a2fa</div>
<div style="left:2px;top:50px;width:2px;height:14px;background:#90ee90;"></div>
<div style="left:4px;top:50px;width:77px;height:14px;background:#d3d3d3;"></div>
<div style="left:81px;top:50px;width:1033px;height:14px;background:#ff0000;"></div>
<svg style="left:5px;top:52px" width="10" height="10"><circle cx="5" cy="5" r="3.7" fill="#40e0d0" stroke="#7a7a7a" stroke-width="0.9"/></svg>
<div style="left:17px;top:52px;font-size:12px;line-height:12px;color:#000;font-family:'Liberation Mono',monospace;transform:scaleX(0.9167);transform-origin:0 0;">23:34</div>
<div style="left:81px;top:52px;font-size:12px;line-height:12px;color:#fff;font-family:'Liberation Mono',monospace;transform:scaleX(0.9167);transform-origin:0 0;">2024-05-24 23:34:45,261 ERROR 71ac2a78-9f3a-4b3c-9a89-556cbff71739</div>
<div style="left:2px;top:66px;width:2px;height:14px;background:#90ee90;"></div>
<div style="left:4px;top:66px;width:77px;height:14px;background:#d3d3d3;"></div>
<div style="left:81px;top:66px;width:1033px;height:14px;background:#ffa500;"></div>
<svg style="left:5px;top:68px" width="10" height="10"><circle cx="5" cy="5" r="3.6" fill="#000"/></svg>
<div style="left:17px;top:68px;font-size:12px;line-height:12px;color:#000;font-family:'Liberation Mono',monospace;transform:scaleX(0.9167);transform-origin:0 0;">23:35</div>
<div style="left:81px;top:68px;font-size:12px;line-height:12px;color:#000;font-family:'Liberation Mono',monospace;transform:scaleX(0.9167);transform-origin:0 0;">2024-05-24 23:35:44,366 WARN 078817dc-4114-4556-8626-00501f3ae409</div>
<div style="left:2px;top:82px;width:2px;height:14px;background:#90ee90;"></div>
<div style="left:4px;top:82px;width:77px;height:14px;background:#d3d3d3;"></div>
<div style="left:81px;top:82px;width:1032px;height:14px;background:#0078d7;"></div>
<svg style="left:5px;top:84px" width="10" height="10"><circle cx="5" cy="5" r="3.7" fill="#40e0d0" stroke="#7a7a7a" stroke-width="0.9"/></svg>
<div style="left:17px;top:84px;font-size:12px;line-height:12px;color:#000;font-family:'Liberation Mono',monospace;transform:scaleX(0.9167);transform-origin:0 0;">23:35</div>
<div style="left:81px;top:84px;font-size:12px;line-height:12px;color:#fff;font-family:'Liberation Mono',monospace;transform:scaleX(0.9167);transform-origin:0 0;">2024-05-24 23:35:57,221 INFO e412ff3a-ef8e-4e23-8a92-fc019808efa2</div>
<div style="left:1px;top:81px;width:1114px;height:16px;border:2px solid #ffa500;"></div>
<div style="left:3px;top:83px;width:1110px;height:12px;background:repeating-linear-gradient(90deg,#333 0 2px,transparent 2px 3px) top/100% 1px no-repeat,repeating-linear-gradient(90deg,#333 0 2px,transparent 2px 3px) bottom/100% 1px no-repeat,repeating-linear-gradient(180deg,#333 0 2px,transparent 2px 3px) left/1px 100% no-repeat,repeating-linear-gradient(180deg,#333 0 2px,transparent 2px 3px) right/1px 100% no-repeat"></div>
<div style="left:2px;top:98px;width:2px;height:14px;background:#90ee90;"></div>
<div style="left:4px;top:98px;width:77px;height:14px;background:#d3d3d3;"></div>
<div style="left:81px;top:98px;width:1033px;height:14px;background:#ffa500;"></div>
<svg style="left:5px;top:100px" width="10" height="10"><circle cx="5" cy="5" r="3.6" fill="#000"/></svg>
<div style="left:17px;top:100px;font-size:12px;line-height:12px;color:#000;font-family:'Liberation Mono',monospace;transform:scaleX(0.9167);transform-origin:0 0;">23:36</div>
<div style="left:81px;top:100px;font-size:12px;line-height:12px;color:#000;font-family:'Liberation Mono',monospace;transform:scaleX(0.9167);transform-origin:0 0;">2024-05-24 23:36:28,589 WARN 7c8837fa-2e8c-4a66-b442-fbb123e9df3a</div>
<div style="left:2px;top:114px;width:2px;height:14px;background:#90ee90;"></div>
<div style="left:4px;top:114px;width:77px;height:14px;background:#d3d3d3;"></div>
<svg style="left:5px;top:116px" width="10" height="10"><circle cx="5" cy="5" r="3.6" fill="#000"/></svg>
<div style="left:17px;top:116px;font-size:12px;line-height:12px;color:#000;font-family:'Liberation Mono',monospace;transform:scaleX(0.9167);transform-origin:0 0;">23:36</div>
<div style="left:81px;top:116px;font-size:12px;line-height:12px;color:#000;font-family:'Liberation Mono',monospace;transform:scaleX(0.9167);transform-origin:0 0;">2024-05-24 23:36:46,908 INFO ef60f69e-af2a-442e-831b-9a867d8df3a7</div>
<div style="left:2px;top:130px;width:2px;height:14px;background:#90ee90;"></div>
<div style="left:4px;top:130px;width:77px;height:14px;background:#d3d3d3;"></div>
<svg style="left:5px;top:132px" width="10" height="10"><circle cx="5" cy="5" r="3.7" fill="#40e0d0" stroke="#7a7a7a" stroke-width="0.9"/></svg>
<div style="left:17px;top:132px;font-size:12px;line-height:12px;color:#000;font-family:'Liberation Mono',monospace;transform:scaleX(0.9167);transform-origin:0 0;">23:37</div>
<div style="left:81px;top:132px;font-size:12px;line-height:12px;color:#000;font-family:'Liberation Mono',monospace;transform:scaleX(0.9167);transform-origin:0 0;">2024-05-24 23:37:00,358 INFO 724be144-a55f-4dbc-9b81-ea8f3ae3e7c3</div>
<div style="left:2px;top:146px;width:2px;height:14px;background:#90ee90;"></div>
<div style="left:4px;top:146px;width:77px;height:14px;background:#d3d3d3;"></div>
<svg style="left:5px;top:148px" width="10" height="10"><circle cx="5" cy="5" r="3.6" fill="#000"/></svg>
<div style="left:17px;top:148px;font-size:12px;line-height:12px;color:#000;font-family:'Liberation Mono',monospace;transform:scaleX(0.9167);transform-origin:0 0;">23:37</div>
<div style="left:81px;top:148px;font-size:12px;line-height:12px;color:#000;font-family:'Liberation Mono',monospace;transform:scaleX(0.9167);transform-origin:0 0;">2024-05-24 23:37:00,532 INFO ae3a74bc-0f18-4f97-b3fd-f3ac6a6b5c29</div>
</div>
<div style="left:1441px;top:583px;width:18px;height:159px;background:#f0f0f0;"></div>
<svg style="left:1445px;top:588px" width="10" height="8"><path d="M1 6.5L4.5 1.5L8 6.5" stroke="#909090" stroke-width="1.3" fill="none"/></svg>
<svg style="left:1445px;top:729px" width="10" height="8"><path d="M1 1.5L4.5 6.5L8 1.5" stroke="#909090" stroke-width="1.3" fill="none"/></svg>
<div style="left:1442px;top:642px;width:16px;height:41px;background:#cdcdcd;"></div>
<div style="left:371px;top:747px;width:33px;height:21px;background:#f9f9f9;border:1px solid #d8d8d8;border-top:none;"></div>
<div style="left:326px;top:752px;font-size:12px;line-height:12px;color:#555;font-family:'Liberation Sans',sans-serif;">Activity</div>
<div style="left:377px;top:752px;font-size:12px;line-height:12px;color:#2a7ad0;font-family:'Liberation Sans',sans-serif;">F3A</div>
<div style="left:314px;top:774px;width:1183px;height:20px;background:#f0eded;"></div>
<div style="left:314px;top:794px;width:1183px;height:1px;background:#d4d4d8;"></div>
<div style="left:314px;top:774px;width:1183px;height:18px;overflow:hidden">
<div style="left:3px;top:6px;font-size:12px;line-height:12px;color:#000">6,104 lines</div>
<div style="left:70px;top:6px;font-size:12px;line-height:12px;color:#1a8a1a">6,104</div>
<div style="left:104px;top:6px;font-size:12px;line-height:12px;color:#000">displayed lines</div>
<div style="left:197px;top:6px;font-size:12px;line-height:12px;color:#000">0 active filters</div>
<div style="left:344px;top:6px;font-size:12px;line-height:12px;color:#f01818">Errors:615</div>
<div style="left:431px;top:6px;font-size:12px;line-height:12px;color:#f8a030">Warnings:1283</div>
<div style="left:551px;top:6px;font-size:12px;line-height:12px;color:#000"><span style="display:inline-block;transform:scaleX(0.965);transform-origin:0 0">00:02:33.5540000</span></div>
</div>
<div style="left:378px;top:776px;width:1px;height:15px;background:#404040;"></div>
<div style="left:505px;top:776px;width:1px;height:15px;background:#404040;"></div>
<div style="left:647px;top:776px;width:1px;height:15px;background:#404040;"></div>
<div style="left:859px;top:776px;width:1px;height:15px;background:#404040;"></div>
<svg style="left:713px;top:777px" width="15" height="15" viewBox="0 0 15 15"><circle cx="6" cy="6" r="4.2" fill="#f4f4f4" stroke="#b8b8b8" stroke-width="1.3"/><path d="M9 9L13.5 13.5" stroke="#a8a8a8" stroke-width="2"/></svg>
<svg style="left:826px;top:777px" width="15" height="15" viewBox="0 0 15 15"><circle cx="6" cy="6" r="4.2" fill="#f4f4f4" stroke="#b8b8b8" stroke-width="1.3"/><path d="M9 9L13.5 13.5" stroke="#a8a8a8" stroke-width="2"/></svg>
<svg style="left:588px;top:776px" width="16" height="16" viewBox="0 0 16 16">
<path d="M3.2 2.2A3 3 0 0 0 2.3 6.6L10.8 15.1A1.2 1.2 0 0 0 12.6 13.3L4.1 4.8A3 3 0 0 0 6.6 1.3L5 3.4L3.6 3.2z" fill="#f0eeee" stroke="#b4b4b4" stroke-width="0.9"/>
<path d="M14.6 1.4L8.6 7.4" stroke="#c8c8c8" stroke-width="2.6"/><path d="M14.6 1.4L8.6 7.4" stroke="#f4f4f4" stroke-width="1"/>
<path d="M9.6 6.4L2.2 13.8" stroke="#e6848a" stroke-width="3.4" stroke-linecap="round"/><path d="M8.6 7.6L3.2 13" stroke="#f4c0b8" stroke-width="1"/>
</svg>
<svg style="left:617px;top:777px" width="15" height="15" viewBox="0 0 15 15"><defs><radialGradient id="gi2" cx="50%" cy="45%" r="55%"><stop offset="0" stop-color="#c4e0f0"/><stop offset="1" stop-color="#94bedc"/></radialGradient></defs><circle cx="7.5" cy="7.5" r="6.6" fill="url(#gi2)" stroke="#9ab8dc" stroke-width="1"/><rect x="6.6" y="5.6" width="1.9" height="6" fill="#fff"/><circle cx="7.5" cy="3.6" r="1.1" fill="#fff"/></svg>
<div style="left:5px;top:807px;font-size:12px;line-height:12px;color:#000;font-family:'Liberation Sans',sans-serif;">No Workspace</div>
<div style="left:86px;top:803px;width:1px;height:17px;background:#404040;"></div>
<div style="left:92px;top:804px;width:208px;height:16px;background:#d0d0d0;"></div>
<div style="left:97px;top:807px;font-size:12px;line-height:12px;color:#f01818;font-family:'Liberation Sans',sans-serif;">Errors:1196</div>
<div style="left:191px;top:807px;font-size:12px;line-height:12px;color:#f8a030;font-family:'Liberation Sans',sans-serif;">Warnings:2410</div>
<svg style="left:159px;top:805px" width="15" height="15" viewBox="0 0 15 15"><circle cx="6" cy="6" r="4.2" fill="#f4f4f4" stroke="#b8b8b8" stroke-width="1.3"/><path d="M9 9L13.5 13.5" stroke="#a8a8a8" stroke-width="2"/></svg>
<svg style="left:272px;top:805px" width="15" height="15" viewBox="0 0 15 15"><circle cx="6" cy="6" r="4.2" fill="#f4f4f4" stroke="#b8b8b8" stroke-width="1.3"/><path d="M9 9L13.5 13.5" stroke="#a8a8a8" stroke-width="2"/></svg>
</body></html>
